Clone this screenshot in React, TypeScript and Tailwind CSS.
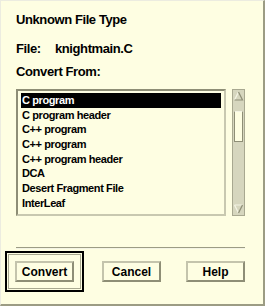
export default function App() {
  const items = [
    "C program",
    "C program header",
    "C++ program",
    "C++ program",
    "C++ program header",
    "DCA",
    "Desert Fragment File",
    "InterLeaf",
  ];
  const btn =
    "w-[59px] h-[21px] flex items-center justify-center text-[12px] leading-none border-2 border-t-[#c4c4ac] border-l-[#c4c4ac] border-b-[#8e8e76] border-r-[#8e8e76] bg-[#fefee2]";
  return (
    <div className="w-[265px] h-[306px] box-border bg-[#fefee2] border-l border-t border-l-[#ecece0] border-t-[#ecece0] border-r-2 border-b-2 border-r-[#9c9c84] border-b-[#9c9c84] text-black font-bold font-['Liberation_Sans',sans-serif] flex flex-col">
      <div className="pl-[15px] pt-[11px]">
        <div className="h-[16px] leading-[16px] text-[13px] tracking-[-0.4px]">Unknown File Type</div>
        <div className="mt-[13px] h-[16px] leading-[16px] text-[13px] tracking-[-0.4px] flex">
          <span className="w-[39px]">File:</span>
          <span>knightmain.C</span>
        </div>
        <div className="mt-[7px] h-[16px] leading-[16px] text-[13px] tracking-[-0.4px]">Convert From:</div>
        <div className="mt-[9px] flex h-[127px]">
          <div className="w-[210px] h-full box-border border-2 border-t-[#8e8e76] border-l-[#8e8e76] border-b-[#c8c8b0] border-r-[#c8c8b0] px-[3px] pt-[2px] bg-[#fefee2]">
            {items.map((t, i) => (
              <div
                key={i}
                className={
                  "h-[14.7px] leading-[14.7px] text-[11px] tracking-[-0.4px] pl-[1px] whitespace-nowrap " +
                  (i === 0 ? "bg-black text-white" : "")
                }
              >
                {t}
              </div>
            ))}
          </div>
          <div className="ml-[6px] w-[13px] h-full box-border border border-[#a8a890] bg-[#d6d6be] flex flex-col">
            <svg width="11" height="12" viewBox="0 0 11 12" className="block">
              <path d="M5.5 2 L1.5 10" stroke="#f4f4e4" strokeWidth="1.2" fill="none" />
              <path d="M5.5 2 L9.5 10 L1.5 10" stroke="#8e8e76" strokeWidth="1.2" fill="none" />
            </svg>
            <div className="mt-[9px] mx-[1px] h-[31px] box-border border border-t-[#f4f4e4] border-l-[#8e8e76] border-b-[#8e8e76] border-r-[#8e8e76] bg-[#fefee2]" />
            <div className="flex-1" />
            <svg width="11" height="12" viewBox="0 0 11 12" className="block">
              <path d="M1.5 2 L9.5 2 M1.5 2 L5.5 10" stroke="#f4f4e4" strokeWidth="1.2" fill="none" />
              <path d="M9.5 2 L5.5 10" stroke="#8e8e76" strokeWidth="1.2" fill="none" />
            </svg>
          </div>
        </div>
        <div className="mt-[31px] w-[229px] h-[2px] border-t border-t-[#9c9c84] border-b border-b-[#f4f4e4]" />
      </div>
      <div className="mt-[2px] flex items-center">
        <div className="ml-[4px] w-[79px] h-[41px] box-border border-2 border-black p-[1px]">
          <div className="w-full h-full box-border border border-[#a8a890] flex items-center justify-center">
            <div className={btn}>Convert</div>
          </div>
        </div>
        <div className={"ml-[18px] " + btn}>Cancel</div>
        <div className={"ml-[25px] " + btn}>Help</div>
      </div>
    </div>
  );
}
